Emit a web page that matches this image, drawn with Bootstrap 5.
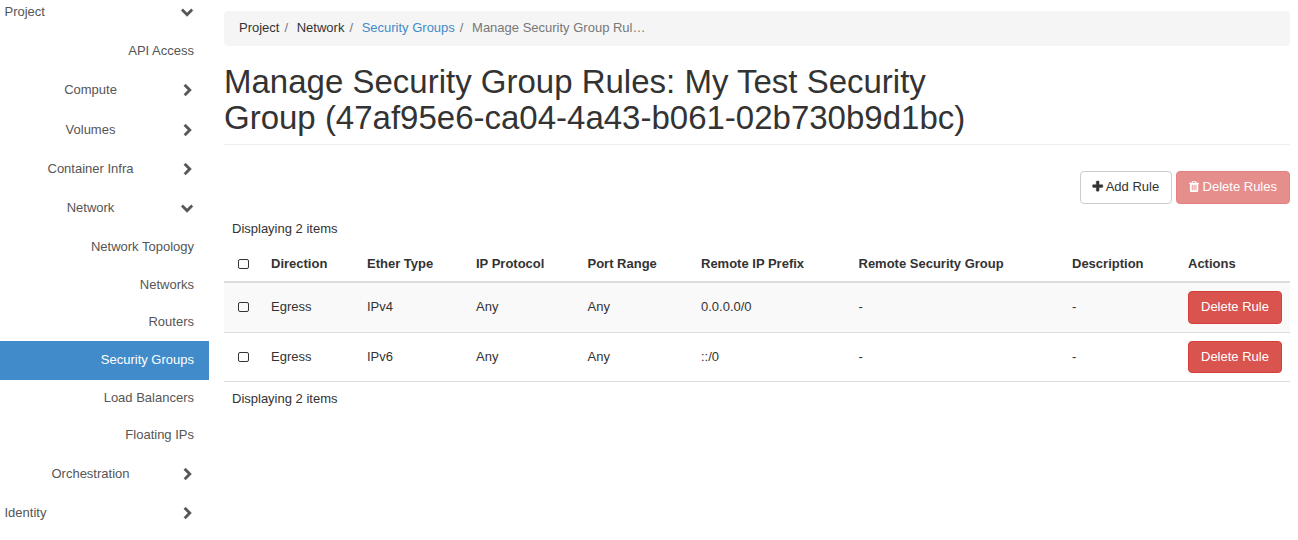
<!DOCTYPE html>
<html lang="en">
<head>
<meta charset="utf-8">
<meta name="viewport" content="width=device-width, initial-scale=1">
<title>Manage Security Group Rules</title>
<link href="https://cdn.jsdelivr.net/npm/bootstrap@5.3.0/dist/css/bootstrap.min.css" rel="stylesheet">
<style>
  body { font: 13px/18.57px "Liberation Sans", Arial, sans-serif; color: #333; background: #fff; height: 540px; overflow: hidden; }
  .sidebar { width: 209px; margin-top: -6.9px; }
  .sidebar a { color: #555; text-decoration: none; display: flex; align-items: center; }
  .side-head { height: 39.3px; padding: 0 15px 0 4.5px; }
  .side-head svg { margin-left: auto; margin-top: .4px; }
  .side-head .fa-down { margin-top: 0; margin-bottom: 2px; }
  .side-group { padding-left: 0; }
  .side-group span { width: 181px; text-align: center; }
  .side-leaf { height: 38.6px; padding: 0 15px; justify-content: flex-end; }
  .side-leaf + .side-leaf { margin-top: -1px; }
  .sidebar .side-leaf.active { background: #428bca; color: #fff; }
  .fa { width: 13px; height: 13px; fill: currentColor; flex: none; overflow: visible; }
  .side-head .fa { stroke: currentColor; stroke-width: 40px; }
  .content-area { margin: 11px 8px 0 15px; }
  .crumbs { background: #f5f5f5; border-radius: 4px; padding: 8px 15px; height: 34.57px; }
  .crumbs .breadcrumb-item { padding: 0; }
  .crumbs .breadcrumb-item + .breadcrumb-item::before { content: "/\00a0"; padding: 0 5px; color: #777; }
  .crumbs .active { color: #777; }
  .crumbs a { color: #428bca; text-decoration: none; }
  .page-title { border-bottom: 1px solid #eee; padding-bottom: 7.5px; margin: 18.3px 0 26px; }
  h1 { font-size: 33px; line-height: 36.3px; font-weight: 400; max-width: 790px; margin: 0; }
  .table-actions { gap: 3.6px; margin-bottom: 8.67px; }
  .btn { --bs-btn-font-size: 13px; --bs-btn-line-height: 18.57px; --bs-btn-padding-x: 12px; --bs-btn-padding-y: 6px; --bs-btn-border-radius: 4px; }
  .btn .fa { width: 10.2px; vertical-align: -2px; }
  .btn-default { --bs-btn-color: #333; --bs-btn-border-color: #ccc; --bs-btn-bg: #fff; }
  .btn-danger { --bs-btn-bg: #d9534f; --bs-btn-border-color: #d43f3a; --bs-btn-disabled-bg: #d9534f; --bs-btn-disabled-border-color: #d43f3a; }
  .count-line { padding: 8px; height: 34.57px; }
  .rules { table-layout: fixed; --bs-table-color: #333; --bs-table-striped-color: #333; --bs-table-striped-bg: #f9f9f9; border-color: #ddd; }
  .rules > :not(caption) > * > * { padding: 8px; border-bottom: 1px solid #ddd; vertical-align: middle; }
  .rules > thead > tr > th { border-bottom-width: 2px; }
  .rules > tbody { border-top: 0; }
  .box { display: block; width: 11px; height: 10px; margin-left: 6px; border: 1px solid #333; border-radius: 2px; }
  tbody tr:first-child .box { margin-bottom: 1px; }
</style>
</head>
<body>
<svg class="d-none">
  <symbol id="right" viewBox="0 0 1792 1792" overflow="visible"><path transform="translate(60)" d="M1363 877l-742 742q-19 19-45 19t-45-19l-166-166q-19-19-19-45t19-45l531-531-531-531q-19-19-19-45t19-45l166-166q19-19 45-19t45 19l742 742q19 19 19 45t-19 45z"/></symbol>
  <symbol id="down" viewBox="0 0 1792 1792" overflow="visible"><path transform="translate(-60)" d="M1683 808l-742 741q-19 19-45 19t-45-19l-742-741q-19-19-19-45.5t19-45.5l166-165q19-19 45-19t45 19l531 531 531-531q19-19 45-19t45 19l166 165q19 19 19 45.5t-19 45.5z"/></symbol>
  <symbol id="plus" viewBox="0 0 1408 1792" overflow="visible"><path transform="translate(-250)" stroke="currentColor" stroke-width="60" d="M1600 736v192q0 40-28 68t-68 28h-416v416q0 40-28 68t-68 28h-192q-40 0-68-28t-28-68v-416h-416q-40 0-68-28t-28-68v-192q0-40 28-68t68-28h416v-416q0-40 28-68t68-28h192q40 0 68 28t28 68v416h416q40 0 68 28t28 68z"/></symbol>
  <symbol id="trash" viewBox="0 0 1408 1792"><path transform="translate(-192)" d="M704 1376v-704q0-14-9-23t-23-9h-64q-14 0-23 9t-9 23v704q0 14 9 23t23 9h64q14 0 23-9t9-23zm256 0v-704q0-14-9-23t-23-9h-64q-14 0-23 9t-9 23v704q0 14 9 23t23 9h64q14 0 23-9t9-23zm256 0v-704q0-14-9-23t-23-9h-64q-14 0-23 9t-9 23v704q0 14 9 23t23 9h64q14 0 23-9t9-23zm-544-992h448l-48-117q-7-9-17-11h-317q-10 2-17 11zm928 32v64q0 14-9 23t-23 9h-96v948q0 83-47 143.5t-113 60.5h-832q-66 0-113-58.5t-47-141.5v-952h-96q-14 0-23-9t-9-23v-64q0-14 9-23t23-9h309l70-167q15-37 54-63t79-26h320q40 0 79 26t54 63l70 167h309q14 0 23 9t9 23z"/></symbol>
</svg>
<div class="d-flex">
  <nav class="sidebar flex-shrink-0">
    <a href="#" class="side-head"><span>Project</span><svg class="fa fa-down"><use href="#down"/></svg></a>
    <a href="#" class="side-leaf">API Access</a>
    <a href="#" class="side-head side-group"><span>Compute</span><svg class="fa"><use href="#right"/></svg></a>
    <a href="#" class="side-head side-group"><span>Volumes</span><svg class="fa"><use href="#right"/></svg></a>
    <a href="#" class="side-head side-group"><span>Container Infra</span><svg class="fa"><use href="#right"/></svg></a>
    <a href="#" class="side-head side-group"><span>Network</span><svg class="fa fa-down"><use href="#down"/></svg></a>
    <a href="#" class="side-leaf">Network Topology</a>
    <a href="#" class="side-leaf">Networks</a>
    <a href="#" class="side-leaf">Routers</a>
    <a href="#" class="side-leaf active">Security Groups</a>
    <a href="#" class="side-leaf">Load Balancers</a>
    <a href="#" class="side-leaf">Floating IPs</a>
    <a href="#" class="side-head side-group"><span>Orchestration</span><svg class="fa"><use href="#right"/></svg></a>
    <a href="#" class="side-head"><span>Identity</span><svg class="fa"><use href="#right"/></svg></a>
  </nav>
  <main class="content-area flex-grow-1">
    <ol class="breadcrumb crumbs mb-0">
      <li class="breadcrumb-item">Project</li>
      <li class="breadcrumb-item">Network</li>
      <li class="breadcrumb-item"><a href="#">Security Groups</a></li>
      <li class="breadcrumb-item active">Manage Security Group Rul…</li>
    </ol>
    <div class="page-title">
      <h1>Manage Security Group Rules: My Test Security Group (47af95e6-ca04-4a43-b061-02b730b9d1bc)</h1>
    </div>
    <div class="table-actions d-flex justify-content-end">
      <button class="btn btn-default"><svg class="fa"><use href="#plus"/></svg> Add Rule</button>
      <button class="btn btn-danger" disabled><svg class="fa"><use href="#trash"/></svg> Delete Rules</button>
    </div>
    <div class="count-line">Displaying 2 items</div>
    <table class="table table-striped rules mb-0">
      <colgroup><col style="width:39px"><col style="width:96px"><col style="width:109px"><col style="width:111.5px"><col style="width:113.5px"><col style="width:157.5px"><col style="width:213.5px"><col style="width:116px"><col style="width:110px"></colgroup>
      <thead>
        <tr><th><span class="box"></span></th><th>Direction</th><th>Ether Type</th><th>IP Protocol</th><th>Port Range</th><th>Remote IP Prefix</th><th>Remote Security Group</th><th>Description</th><th>Actions</th></tr>
      </thead>
      <tbody>
        <tr><td><span class="box"></span></td><td>Egress</td><td>IPv4</td><td>Any</td><td>Any</td><td>0.0.0.0/0</td><td>-</td><td>-</td><td><button class="btn btn-danger d-block text-nowrap">Delete Rule</button></td></tr>
        <tr><td><span class="box"></span></td><td>Egress</td><td>IPv6</td><td>Any</td><td>Any</td><td>::/0</td><td>-</td><td>-</td><td><button class="btn btn-danger d-block text-nowrap">Delete Rule</button></td></tr>
      </tbody>
    </table>
    <div class="count-line">Displaying 2 items</div>
  </main>
</div>
<script src="https://cdn.jsdelivr.net/npm/bootstrap@5.3.0/dist/js/bootstrap.bundle.min.js"></script>
</body>
</html>
